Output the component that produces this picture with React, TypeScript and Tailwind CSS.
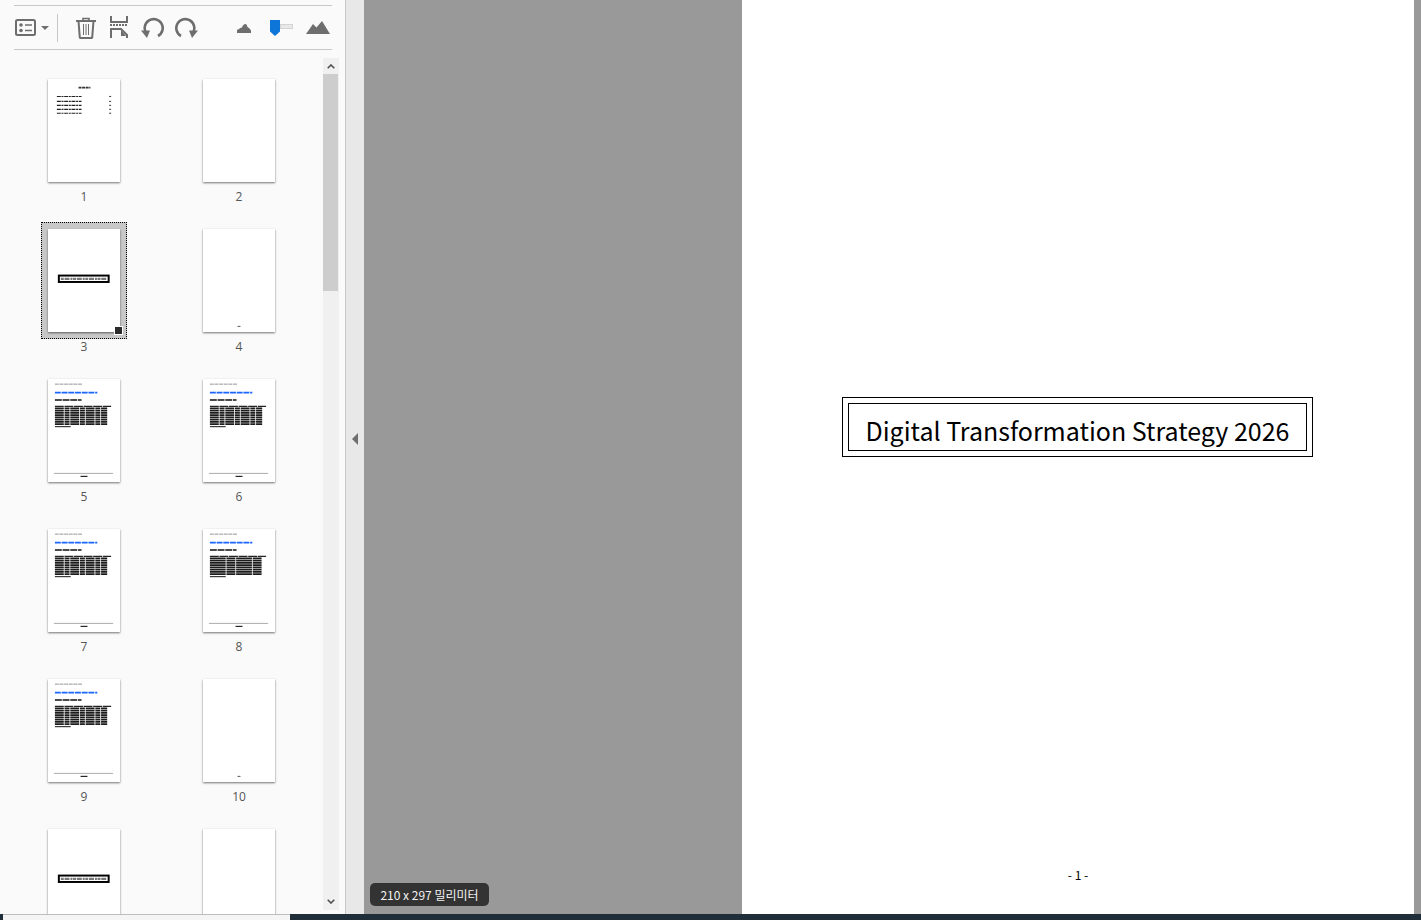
const pages = [
  { n: 1, kind: "toc" },
  { n: 2, kind: "blank" },
  { n: 3, kind: "title", selected: true },
  { n: 4, kind: "dot" },
  { n: 5, kind: "text" },
  { n: 6, kind: "text" },
  { n: 7, kind: "text" },
  { n: 8, kind: "dense" },
  { n: 9, kind: "text" },
  { n: 10, kind: "dot" },
  { n: 11, kind: "title" },
  { n: 12, kind: "blank" },
];

const bodyRows = [29, 31.3, 33.6, 35.9, 38.2, 40.5, 42.8, 45.1];

function PagePreview({ kind }: { kind: string }) {
  if (kind === "blank") return null;

  if (kind === "dot") {
    return (
      <svg viewBox="0 0 73 103" className="block h-full w-full">
        <rect x="35" y="97.5" width="3" height="1" fill="#555" />
      </svg>
    );
  }

  if (kind === "toc") {
    return (
      <svg viewBox="0 0 73 103" className="block h-full w-full blur-[0.3px]">
        <line x1="31" x2="43" y1="8" y2="8" stroke="#333" strokeWidth="1.6" strokeDasharray="3 0.6" />
        {[17, 22, 26, 30, 34].map((y) => (
          <g key={y}>
            <line x1="9" x2="34" y1={y} y2={y} stroke="#222" strokeWidth="1.2" strokeDasharray="4 0.7 2 0.7" />
            <line x1="62" x2="64" y1={y} y2={y} stroke="#444" strokeWidth="1.1" />
          </g>
        ))}
      </svg>
    );
  }

  if (kind === "title") {
    return (
      <svg viewBox="0 0 73 103" className="block h-full w-full">
        <rect x="11" y="46.5" width="50.5" height="6.5" fill="white" stroke="black" strokeWidth="2" />
        <line x1="13" x2="60" y1="49.8" y2="49.8" stroke="#777" strokeWidth="2.2" strokeDasharray="3 0.8 5 1 2 0.6" className="blur-[0.3px]" />
      </svg>
    );
  }

  return (
    <svg viewBox="0 0 73 103" className="block h-full w-full blur-[0.3px]">
      <line x1="7" x2="35" y1="4.5" y2="4.5" stroke="#888" strokeWidth="0.9" strokeDasharray="4 0.7" />
      <line x1="7" x2="50" y1="13" y2="13" stroke="#1a66ff" strokeWidth="1.8" strokeDasharray="6 0.8" />
      <line x1="7" x2="34" y1="20.5" y2="20.5" stroke="#111" strokeWidth="1.5" strokeDasharray="7 0.8" />
      <line x1="7" x2="64" y1="27" y2="27" stroke="#222" strokeWidth="1.1" strokeDasharray="9 0.7" />
      {bodyRows.map((y) => (
        <line
          key={y}
          x1="7"
          x2="60"
          y1={y}
          y2={y}
          stroke="#1c1c1c"
          strokeWidth="1.8"
          strokeDasharray={kind === "dense" ? "16 0.8 9 0.8" : "9 0.8 5 0.8"}
        />
      ))}
      <line x1="7" x2="23" y1="47.6" y2="47.6" stroke="#222" strokeWidth="1.1" />
      <line x1="6" x2="66" y1="95" y2="95" stroke="#aaa" strokeWidth="1" />
      <line x1="33" x2="40" y1="98" y2="98" stroke="#111" strokeWidth="1.1" />
    </svg>
  );
}

function Thumb({ n, kind, selected }: { n: number; kind: string; selected?: boolean }) {
  return (
    <div className="flex h-[150px] flex-col items-center">
      <div
        className={
          selected
            ? "border border-dotted border-black bg-[#c8c8c8] p-[6px]"
            : "border border-transparent p-[6px]"
        }
      >
        <div className="relative h-[103px] w-[72px] bg-white shadow-[0_1px_2px_rgba(0,0,0,0.55)]">
          <PagePreview kind={kind} />
          {selected && (
            <div className="absolute right-[-2px] bottom-[-2px] h-[7px] w-[7px] bg-[#2b2b2b] outline outline-1 outline-white" />
          )}
        </div>
      </div>
      {n <= 10 && <div className="text-[12px] leading-[16px] text-[#555]">{n}</div>}
    </div>
  );
}

function Toolbar() {
  return (
    <div className="flex h-[45px] w-[318px] shrink-0 items-center border-y border-[#c8c8c8] text-[#6e6e6e]">
      <svg width="21" height="18" viewBox="0 0 21 18" className="ml-[1px]" fill="none">
        <rect x="1" y="1" width="19" height="15" rx="1.5" stroke="currentColor" strokeWidth="2" />
        <circle cx="6" cy="6" r="1.8" fill="currentColor" />
        <circle cx="6" cy="11.5" r="1.8" fill="currentColor" />
        <path d="M10 6h7M10 11.5h7" stroke="currentColor" strokeWidth="1.6" />
      </svg>
      <svg width="8" height="4" viewBox="0 0 8 4" className="ml-[5px]">
        <path d="M0 0h8L4 4z" fill="currentColor" />
      </svg>
      <div className="ml-[8px] h-[28px] w-px bg-[#c8c8c8]" />
      <svg width="20" height="22" viewBox="0 0 20 22" className="ml-[18px]" fill="none" stroke="currentColor">
        <path d="M0 4h20" strokeWidth="2" />
        <path d="M7 4V1.5h6V4" strokeWidth="1.6" />
        <path d="M2.5 4l1.3 16.5a1 1 0 0 0 1 .5h10.4a1 1 0 0 0 1-.5L17.500 4" strokeWidth="2" />
        <path d="M7.500 7v11M10 7v11M12.500 7v11" strokeWidth="1" />
      </svg>
      <svg width="18" height="23" viewBox="0 0 18 23" className="ml-[14px]" fill="none" stroke="currentColor">
        <path d="M1 0v6h16V0" strokeWidth="2" />
        <path d="M0 9h18" strokeWidth="2" strokeDasharray="2 1" />
        <path d="M1 22v-9h10l6 6v3" strokeWidth="2" />
        <path d="M11 14l5 6h-5z" fill="currentColor" stroke="none" />
      </svg>
      <svg width="23" height="22" viewBox="0 0 23 22" className="ml-[13px]" fill="none">
        <path d="M5.500 16.500A9 9 0 1 1 17 19" stroke="currentColor" strokeWidth="2.600" />
        <path d="M0 13.500h9l-3 7.500z" fill="currentColor" />
      </svg>
      <svg width="23" height="22" viewBox="0 0 23 22" className="ml-[11px]" fill="none">
        <path d="M17.500 16.500A9 9 0 1 0 6 19" stroke="currentColor" strokeWidth="2.600" />
        <path d="M23 13.500h-9l3 7.500z" fill="currentColor" />
      </svg>
      <svg width="14" height="10" viewBox="0 0 14 10" className="ml-[39px]">
        <path d="M0 10V7.500Q0 6 2 6 3 4.500 5 4.500 6 1 8.500 1 10 1 10.500 4 13 5 14 7.500V10z" fill="currentColor" />
      </svg>
      <div className="ml-[19px] flex items-center">
        <svg width="10" height="16" viewBox="0 0 10 16">
          <path d="M0 0h10v11.500L5 16 0 11.500z" fill="#0e76d8" />
        </svg>
        <div className="mb-[3px] h-[5px] w-[13px] border border-[#d4d4d4] bg-[#e8e8e8]" />
      </div>
      <svg width="24" height="13" viewBox="0 0 24 13" className="ml-[13px]">
        <path d="M0 13L7 3l3.500 3.500L16 0l8 13z" fill="currentColor" />
      </svg>
    </div>
  );
}

function Scrollbar() {
  return (
    <div className="flex h-[852px] w-[16px] shrink-0 flex-col bg-[#f0f0f0]">
      <div className="flex h-[16px] items-center justify-center">
        <svg width="8" height="5" viewBox="0 0 8 5" fill="none">
          <path d="M.7 4.300L4 1l3.300 3.300" stroke="#505050" strokeWidth="1.600" />
        </svg>
      </div>
      <div className="h-[217px] w-[15px] bg-[#cdcdcd]" />
      <div className="mb-[1px] mt-auto flex h-[16px] items-center justify-center">
        <svg width="8" height="5" viewBox="0 0 8 5" fill="none">
          <path d="M.7.7L4 4l3.300-3.300" stroke="#505050" strokeWidth="1.600" />
        </svg>
      </div>
    </div>
  );
}

export default function App() {
  return (
    <div className="flex h-[920px] w-[1421px] flex-col overflow-hidden bg-[#999999] font-['Open_Sans',sans-serif]">
      <div className="flex min-h-0 flex-1">
        {/* thumbnails panel */}
        <aside className="flex w-[346px] shrink-0 flex-col border-r border-[#c8c8c8] bg-[#fafafa] pt-[5px]">
          <div className="pl-[14px]">
            <Toolbar />
          </div>
          <div className="mt-[8px] flex min-h-0 flex-1">
            <div className="h-full w-[323px] shrink-0 overflow-hidden pl-[6.5px] pt-[14px]">
              <div className="grid grid-cols-[155px_155px]">
                {pages.map((p) => (
                  <Thumb key={p.n} n={p.n} kind={p.kind} selected={p.selected} />
                ))}
              </div>
            </div>
            <Scrollbar />
          </div>
        </aside>

        <div className="flex w-[18px] shrink-0 items-center justify-center bg-[#e8e8e8]">
          <svg width="6" height="12" viewBox="0 0 6 12" className="mr-[1px] mb-[36px]">
            <path d="M6 0v12L0 6z" fill="#6e6e6e" />
          </svg>
        </div>

        <div className="relative w-[378px] shrink-0 bg-[#999999]">
          <div className="absolute bottom-[8px] left-[6px] flex h-[23px] w-[119px] items-center justify-center rounded-[5px] bg-[#333333] font-['Noto_Sans_CJK_KR',sans-serif] text-[12px] text-[#f2f2f2]">
            210 x 297 밀리미터
          </div>
        </div>

        {/* current page */}
        <main className="flex w-[672px] shrink-0 flex-col items-center bg-white pt-[397px]">
          <div className="ml-[-1px] border border-black p-[5px]">
            <div className="flex h-[48px] w-[459px] items-center justify-center border border-black pt-[7px] font-['Noto_Sans_CJK_KR',sans-serif] text-[25px] text-black">
              Digital Transformation Strategy 2026
            </div>
          </div>
          <div className="mb-[31px] mt-auto font-['Noto_Sans_CJK_KR',sans-serif] text-[12px] leading-[16px] text-black">
            - 1 -
          </div>
        </main>
      </div>

      <div className="flex h-[6px] shrink-0 bg-[#1f2e38]">
        <div className="ml-[3px] h-full w-[287px] border-t border-[#bdbdbd] bg-[#f5f5f5]" />
      </div>
    </div>
  );
}
